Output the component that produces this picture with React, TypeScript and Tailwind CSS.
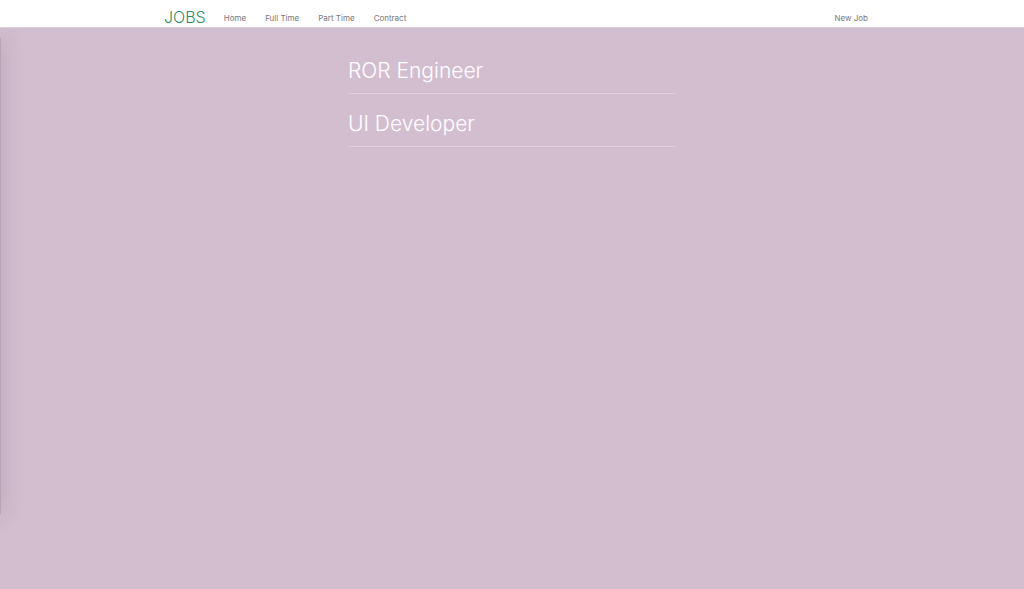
const navItems = ["Home", "Full Time", "Part Time", "Contract"];
const jobs = ["ROR Engineer", "UI Developer"];

export default function App() {
  return (
    <div className="flex min-h-screen flex-col bg-[#d3bed0] font-['Inter','Liberation_Sans',sans-serif]">
      <header className="border-b border-[#dccfda] bg-white">
        <nav className="mx-auto flex h-[27px] w-11/16 items-end text-[8px] leading-[18px] text-[#777777]">
          <a href="#" className="mr-[18px] ml-[4px] text-[16px] leading-[20px] font-light text-[#2e8b63]">
            JOBS
          </a>
          <ul className="flex gap-[19px]">
            {navItems.map((item) => (
              <li key={item}>
                <a href="#">{item}</a>
              </li>
            ))}
          </ul>
          <a href="#" className="-mr-[4px] ml-auto">
            New Job
          </a>
        </nav>
      </header>
      <div className="relative flex grow flex-col overflow-hidden">
        <main className="mx-auto w-[328px] max-w-full pt-[13px]">
          <ul>
            {jobs.map((job) => (
              <li key={job} className="border-b border-[#dfcedc] pt-[17px] pb-[9px]">
                <h2 className="text-[21px] leading-[26px] font-light text-white">
                  <a href="#">{job}</a>
                </h2>
              </li>
            ))}
          </ul>
        </main>
        <div className="absolute top-[10px] bottom-[75px] -left-[19px] w-[20px] bg-[#b9a3b5] shadow-[0_0_24px_rgba(70,40,65,0.18)]" />
      </div>
    </div>
  );
}
